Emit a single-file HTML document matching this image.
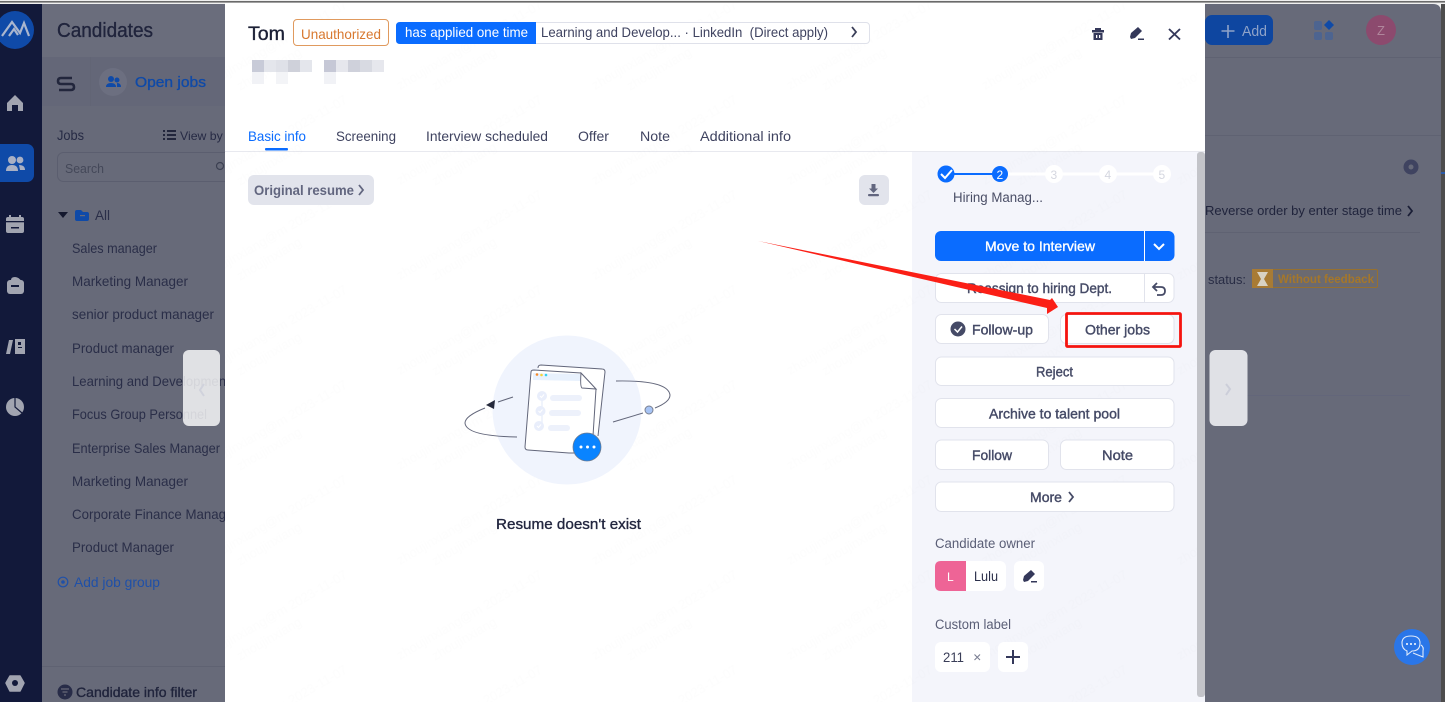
<!DOCTYPE html>
<html><head><meta charset="utf-8"><title>Candidates</title>
<style>
html,body{margin:0;padding:0;background:#fff;width:1445px;height:702px;overflow:hidden}
svg{display:block}
text{font-family:"Liberation Sans","Noto Sans CJK SC",sans-serif;font-size:14px;white-space:pre}
.m{stroke:currentColor;stroke-width:.35px}
.d{fill:#262a44}
.l{font-size:14px;fill:#2a2e48}
.b{fill:#454a66;color:#454a66;stroke:#454a66;stroke-width:.4px;font-size:14px}
.t{fill:#3f4360}
.wm{font-size:13px;fill:#000;opacity:.007}
</style></head><body>
<svg width="1445" height="702" viewBox="0 0 1445 702" xmlns="http://www.w3.org/2000/svg">
<defs>
<pattern id="wm" width="195" height="95" patternUnits="userSpaceOnUse">
<g transform="translate(10,90) rotate(-30)"><text class="wm" x="0" y="0">zhoujinxiang@m 2023-11-07</text><text class="wm" x="30" y="18">zhoujinxiang</text></g>
</pattern>
</defs>
<!-- screen frame -->
<rect width="1445" height="702" fill="#f0f0f0"/>
<rect y="1" width="1445" height="1.6" fill="#6a6a6a"/>
<rect x="1441" y="4" width="4" height="698" fill="#4d4d4d"/>
<path d="M0 4H1433Q1441 4 1441 12V702H0Z" fill="#676a79"/>
<!-- sidebar -->
<rect y="4" width="42" height="698" fill="#12193a"/>
<circle cx="15" cy="30" r="19" fill="#0f4aa8"/>
<path d="M2 36L12 22L20 33L24 23L29 36M9 36L14 29L18 35" fill="none" stroke="#aab6ce" stroke-width="2.200"/>
<path d="M7 103L15 95L23 103V111H18V105H12V111H7Z" fill="#a1a4b0"/>
<rect x="-8" y="144" width="42" height="38" rx="7" fill="#0f4aa8"/>
<circle cx="12" cy="160" r="4" fill="#a9b0c4"/><circle cx="20" cy="160" r="3.4" fill="#a9b0c4"/>
<path d="M6 171Q6 165 12 165Q18 165 18 171ZM19 165Q25 165 25 170H20Z" fill="#a9b0c4"/>
<rect x="6" y="217" width="18" height="16" rx="2" fill="#a1a4b0"/><rect x="9" y="215" width="2" height="4" fill="#a1a4b0"/><rect x="19" y="215" width="2" height="4" fill="#a1a4b0"/><rect x="6" y="221" width="18" height="1.3" fill="#12193a"/><rect x="11" y="227" width="8" height="1.5" fill="#12193a"/>
<path d="M11 282V280Q11 277 15 277Q19 277 22 282Z" fill="#a1a4b0"/><rect x="7" y="280" width="17" height="14" rx="3" fill="#a1a4b0"/><rect x="11" y="285" width="8" height="2" fill="#12193a"/>
<path d="M9 340H13L10 354H6ZM15 339H25V354H15Z" fill="#a1a4b0"/><rect x="18" y="342" width="3" height="3" fill="#12193a"/><rect x="18" y="347" width="4" height="1" fill="#12193a"/>
<circle cx="15" cy="407" r="9" fill="#a1a4b0"/><path d="M15 398V407L22 413" fill="none" stroke="#12193a" stroke-width="1.2"/>
<path d="M10 676H20L24 683L20 691H10L6 683Z" fill="#a1a4b0" stroke="#a1a4b0" stroke-width="1.5" stroke-linejoin="round"/><circle cx="15" cy="683" r="3" fill="#12193a"/>
<!-- left panel -->
<rect x="42" y="4" width="200" height="53" fill="#6a6d7c"/>
<rect x="42" y="57" width="200" height="49" fill="#646778"/>
<rect x="90" y="57" width="1" height="49" fill="#626575"/>
<rect x="42" y="666" width="200" height="1" fill="#5f6272"/>
<text class="m" x="57" y="37" textLength="96" lengthAdjust="spacingAndGlyphs" style="font-size:20px;fill:#20243c;color:#20243c">Candidates</text>
<path d="M72 78H61Q58 78 58 81Q58 84 61 84H71Q74 84 74 87Q74 90 71 90H59" fill="none" stroke="#22263c" stroke-width="2.600"/>
<circle cx="113" cy="82" r="14" fill="#6c6f80"/>
<circle cx="111" cy="79" r="3" fill="#0f4aa8"/><circle cx="117" cy="80" r="2.5" fill="#0f4aa8"/><path d="M106 87Q106 83 111 83Q116 83 116 87ZM117 83Q121 83 121 87H117Z" fill="#0f4aa8"/>
<text class="m" x="135" y="87" textLength="71" lengthAdjust="spacingAndGlyphs" style="font-size:15px;fill:#0f4aa8;color:#0f4aa8">Open jobs</text>
<text x="57" y="140" textLength="27" lengthAdjust="spacingAndGlyphs" class="d">Jobs</text>
<path d="M163 130h2v2h-2zM163 134h2v2h-2zM163 138h2v2h-2zM167 130h9v2h-9zM167 134h9v2h-9zM167 138h9v2h-9z" fill="#22263c"/>
<text x="180" y="140" textLength="53" lengthAdjust="spacingAndGlyphs" style="font-size:12px;fill:#262a44">View by g</text>
<rect x="57.5" y="152.5" width="190" height="29" rx="6" fill="#676a79" stroke="#5b5e6f"/>
<text x="65" y="173" textLength="39" lengthAdjust="spacingAndGlyphs" style="font-size:13px;fill:#444859">Search</text>
<circle cx="220" cy="166" r="3.5" fill="none" stroke="#3c4052" stroke-width="1.2"/>
<path d="M58 212H68L63 218Z" fill="#14182e"/>
<path d="M75 212Q75 210 77 210H81L83 212H87Q89 212 89 214V219Q89 221 87 221H77Q75 221 75 219Z" fill="#0f4aa8"/><rect x="80" y="215" width="5" height="1.2" fill="#676a79"/>
<text x="95" y="220" textLength="15" lengthAdjust="spacingAndGlyphs" class="l">All</text>
<text class="l" x="72" y="253" textLength="85" lengthAdjust="spacingAndGlyphs">Sales manager</text>
<text class="l" x="72" y="286" textLength="116" lengthAdjust="spacingAndGlyphs">Marketing Manager</text>
<text class="l" x="72" y="319" textLength="142" lengthAdjust="spacingAndGlyphs">senior product manager</text>
<text class="l" x="72" y="353" textLength="102" lengthAdjust="spacingAndGlyphs">Product manager</text>
<text class="l" x="72" y="386" textLength="154" lengthAdjust="spacingAndGlyphs">Learning and Developmen</text>
<text class="l" x="72" y="419" textLength="135" lengthAdjust="spacingAndGlyphs">Focus Group Personnel</text>
<text class="l" x="72" y="453" textLength="148" lengthAdjust="spacingAndGlyphs">Enterprise Sales Manager</text>
<text class="l" x="72" y="486" textLength="116" lengthAdjust="spacingAndGlyphs">Marketing Manager</text>
<text class="l" x="72" y="519" textLength="154" lengthAdjust="spacingAndGlyphs">Corporate Finance Manag</text>
<text class="l" x="72" y="552" textLength="102" lengthAdjust="spacingAndGlyphs">Product Manager</text>
<circle cx="63" cy="582" r="4.8" fill="none" stroke="#1f50a8" stroke-width="1.2"/><circle cx="63" cy="582" r="1.8" fill="#1f50a8"/>
<text x="74" y="587" textLength="86" lengthAdjust="spacingAndGlyphs" style="fill:#1f50a8">Add job group</text>
<circle cx="65" cy="692" r="7.5" fill="#282c48"/><path d="M61 689H69M62.500 692H67.500M64 695H66" stroke="#676a79" stroke-width="1.3"/>
<text class="m" x="76" y="697" textLength="121" lengthAdjust="spacingAndGlyphs" style="fill:#20243c;color:#20243c">Candidate info filter</text>
<!-- right background -->
<rect x="1205" y="57" width="236" height="1" fill="#5f6272"/>
<rect x="1205" y="135" width="236" height="1" fill="#5f6272"/>
<rect x="1205" y="15" width="68" height="30" rx="7" fill="#0e46a0"/>
<path d="M1228 25V38M1221.500 31H1234.500" stroke="#8fa3c8" stroke-width="1.6"/>
<text x="1242" y="36" textLength="25" lengthAdjust="spacingAndGlyphs" style="font-size:15px;fill:#8fa3c8">Add</text>
<rect x="1314" y="21" width="8" height="9" rx="2" fill="#4d6490"/><path d="M1329 20L1334 25L1329 30L1324 25Z" fill="#0f4aa8"/><rect x="1314" y="32" width="8" height="8" rx="2" fill="#4d6490"/><rect x="1325" y="32" width="8" height="8" rx="2" fill="#4d6490"/>
<circle cx="1381" cy="30" r="15" fill="#8c4a6e"/><text x="1377" y="35" style="font-size:13px;fill:#b0869c">Z</text>
<circle cx="1411" cy="167" r="7.500" fill="#3f4360"/><circle cx="1411" cy="167" r="2.500" fill="#676a79"/>
<rect x="1441" y="172" width="4" height="2" fill="#2b5aa8"/>
<text x="1205" y="215" textLength="197" lengthAdjust="spacingAndGlyphs" style="font-size:13px;fill:#20243c">Reverse order by enter stage time</text>
<path d="M1408 206L1412 211L1408 216" fill="none" stroke="#1a1e36" stroke-width="1.800"/>
<rect x="1205" y="232" width="215" height="1" fill="#5f6272"/>
<text x="1208" y="284" textLength="38" lengthAdjust="spacingAndGlyphs" style="font-size:13px;fill:#282c44">status:</text>
<rect x="1252.500" y="269.500" width="125" height="18" rx="1.500" fill="#6b6a70" stroke="#96702f"/>
<rect x="1252" y="269" width="21" height="19" fill="#a87b35"/><path d="M1257 272H1268L1264 279L1268 286H1257L1261 279Z" fill="#d8d2c4"/>
<text x="1278" y="283" textLength="96" lengthAdjust="spacingAndGlyphs" style="font-size:12px;font-weight:700;fill:#a5772a">Without feedback</text>
<rect x="1247" y="395" width="163" height="1" fill="#63667a"/>
<circle cx="1412" cy="647" r="18" fill="#2a76e8"/>
<path d="M1411 636Q1402 636 1402 643Q1402 649 1407 651L1407 655L1412 651Q1420 651 1420 643Q1420 636 1411 636Z" fill="none" stroke="#e0ebfb" stroke-width="1.100"/>
<path d="M1421 645Q1424 647 1423 651L1423 657L1418 655L1413 653" fill="none" stroke="#e0ebfb" stroke-width="1.100"/>
<circle cx="1407" cy="644" r="1" fill="#fff"/><circle cx="1411" cy="644" r="1" fill="#fff"/><circle cx="1415" cy="644" r="1" fill="#fff"/>
<!-- modal -->
<rect x="225" y="3" width="980" height="699" fill="#fff"/>
<rect x="912" y="152" width="293" height="550" fill="#f4f5fb"/>
<rect x="225" y="151" width="980" height="1" fill="#e8e9ef"/>
<rect x="1197" y="152" width="8" height="545" rx="3" fill="#c3c4c9"/>
<rect x="225" y="3" width="972" height="699" fill="url(#wm)"/>
<text class="m" x="248" y="40" textLength="37" lengthAdjust="spacingAndGlyphs" style="font-size:19px;fill:#1c2036;color:#1c2036">Tom</text>
<rect x="293.500" y="19.500" width="95" height="26" rx="3.500" fill="#fff" stroke="#e09a5e"/>
<text x="301" y="39" textLength="80" lengthAdjust="spacingAndGlyphs" style="fill:#d8782f">Unauthorized</text>
<rect x="396.500" y="22.500" width="473" height="21" rx="3.500" fill="#fff" stroke="#dfe1ea"/>
<path d="M536 22H400Q396 22 396 26V40Q396 44 400 44H536Z" fill="#0a6cff"/>
<text x="405" y="37" textLength="123" lengthAdjust="spacingAndGlyphs" style="fill:#fff">has applied one time</text>
<text x="541" y="37" textLength="287" lengthAdjust="spacingAndGlyphs" class="t">Learning and Develop... · LinkedIn  (Direct apply)</text>
<path d="M852 27L856 32L852 37" fill="none" stroke="#3a3e58" stroke-width="1.800"/>
<g>
<rect x="252" y="60" width="12" height="12" fill="#c8cbd8"/><rect x="264" y="60" width="12" height="12" fill="#e4e6ec"/><rect x="276" y="60" width="12" height="12" fill="#dfe1e8"/><rect x="288" y="60" width="12" height="12" fill="#cfd1da"/><rect x="300" y="60" width="12" height="12" fill="#e4e6ec"/>
<rect x="324" y="60" width="12" height="12" fill="#c6c8d6"/><rect x="336" y="60" width="12" height="12" fill="#e6e7ed"/><rect x="348" y="60" width="12" height="12" fill="#cfd1db"/><rect x="360" y="60" width="12" height="12" fill="#d8dae2"/><rect x="372" y="60" width="12" height="12" fill="#e6e7ed"/>
<rect x="252" y="72" width="12" height="12" fill="#f1f2f6"/><rect x="276" y="72" width="12" height="12" fill="#f3f4f7"/><rect x="324" y="72" width="12" height="12" fill="#f1f2f6"/>
</g>
<!-- header icons -->
<path d="M1095 28H1101V30H1095ZM1092 30H1104V32.500H1092ZM1093.500 33H1102.500V40H1093.500Z" fill="#34385a"/><rect x="1096" y="35" width="1.300" height="3" fill="#fff"/><rect x="1099" y="35" width="1.300" height="3" fill="#fff"/>
<path d="M1130 37L1131 33L1138 27L1142 31L1135 38L1131 39Z" fill="#34385a"/><rect x="1138" y="38.500" width="6" height="1.500" fill="#34385a"/>
<path d="M1169 29L1180 39.500M1180 29L1169 39.500" stroke="#34385a" stroke-width="1.900"/>
<!-- tabs -->
<text x="248" y="141" textLength="58" lengthAdjust="spacingAndGlyphs" style="fill:#0a6cff">Basic info</text>
<text x="336" y="141" textLength="60" lengthAdjust="spacingAndGlyphs" class="t">Screening</text>
<text x="426" y="141" textLength="122" lengthAdjust="spacingAndGlyphs" class="t">Interview scheduled</text>
<text x="578" y="141" textLength="31" lengthAdjust="spacingAndGlyphs" class="t">Offer</text>
<text x="640" y="141" textLength="30" lengthAdjust="spacingAndGlyphs" class="t">Note</text>
<text x="700" y="141" textLength="91" lengthAdjust="spacingAndGlyphs" class="t">Additional info</text>
<rect x="265" y="148" width="23" height="2.500" rx="1" fill="#0a6cff"/>
<!-- resume toolbar -->
<rect x="248" y="175" width="126" height="30" rx="6" fill="#e2e4ec"/>
<text x="254" y="195" textLength="100" lengthAdjust="spacingAndGlyphs" style="font-size:13.500px;font-weight:700;fill:#62667f">Original resume</text>
<path d="M359 185L363 190L359 195" fill="none" stroke="#62667f" stroke-width="1.800"/>
<rect x="859" y="175" width="30" height="30" rx="6" fill="#e2e4ec"/>
<path d="M871.500 184H875.500V188.500H878L873.500 193L869 188.500H871.500Z" fill="#62667f"/><rect x="868" y="194" width="11" height="2.200" rx="1" fill="#62667f"/>
<!-- illustration -->
<circle cx="567" cy="410" r="74.500" fill="#f0f4fd"/>
<path d="M538 368Q538 365 541 365L602 369Q605 369 605 372L598 436" fill="#fff" stroke="#62667a" stroke-width="1"/>
<path d="M531 372Q531 370 534 370L581 373L596 389L593 436L582 453L569 453L528 450Q525 450 525 447Z" fill="#fff" stroke="#62667a" stroke-width="1"/>
<path d="M533 373L580 374L581 381L533 380Z" fill="#e8f1fd"/>
<circle cx="537" cy="374.500" r="1.300" fill="#f58a2a"/><circle cx="541.500" cy="375" r="1.300" fill="#f5d33a"/><circle cx="546" cy="375" r="1.300" fill="#35d2f0"/>
<path d="M581 373Q580 387 582 388L596 389Z" fill="#fff" stroke="#62667a" stroke-width="1"/>
<path d="M542 396V426" stroke="#eaf0fb" stroke-width="1.500"/>
<circle cx="542" cy="396" r="5" fill="#e9eefb"/><circle cx="540.500" cy="411" r="5" fill="#e9eefb"/><circle cx="539" cy="426" r="5" fill="#e9eefb"/>
<path d="M540 396L541.500 397.500L544 394.500M538.500 411L540 412.500L542.500 409.500M537 426L538.500 427.500L541 424.500" fill="none" stroke="#fff" stroke-width="1"/>
<rect x="550" y="395" width="32" height="6" rx="3" fill="#edf1fb"/><rect x="549" y="410" width="32" height="6" rx="3" fill="#edf1fb"/><rect x="548" y="425" width="22" height="6" rx="3" fill="#edf1fb"/>
<path d="M616 381Q668 380 670 395Q670 402 655 408M643 413L613 422" fill="none" stroke="#62667a" stroke-width="1"/>
<circle cx="649" cy="410" r="4" fill="#a7c4f5" stroke="#7a8090" stroke-width="1"/>
<path d="M513 397L498 402M485 408Q465 416 465 423Q466 436 517 437" fill="none" stroke="#62667a" stroke-width="1"/>
<path d="M486 405L495 400L494 409Z" fill="#262a3c"/>
<circle cx="587" cy="447" r="14" fill="#0a84ff" stroke="#6b7a90" stroke-width=".8"/>
<circle cx="581" cy="447" r="1.500" fill="#fff"/><circle cx="587.500" cy="447" r="1.500" fill="#fff"/><circle cx="594" cy="447" r="1.500" fill="#fff"/>
<text class="m" x="496" y="529" textLength="145" lengthAdjust="spacingAndGlyphs" style="font-size:15px;fill:#22263f;color:#22263f">Resume doesn't exist</text>
<!-- nav buttons -->
<rect x="183" y="350" width="37" height="76" rx="6" fill="#fff" fill-opacity=".8"/>
<path d="M204 384L200 390L204 396" fill="none" stroke="#d0d2dc" stroke-width="2"/>
<rect x="1209.500" y="350" width="38" height="76" rx="6" fill="#e0e1e6"/>
<path d="M1226 384L1230 389L1226 395" fill="none" stroke="#ccced9" stroke-width="2"/>
<!-- stepper -->
<rect x="1000" y="172.500" width="162" height="3" fill="#fff"/>
<rect x="946" y="173" width="54" height="2" fill="#0a6cff"/>
<circle cx="946" cy="174" r="8.500" fill="#0a6cff"/><path d="M941 174L945 178L952 170" fill="none" stroke="#fff" stroke-width="2"/>
<circle cx="1000" cy="174" r="8" fill="#0a6cff"/><text x="996.500" y="179" style="font-size:12px;fill:#fff">2</text>
<circle cx="1054" cy="174" r="9" fill="#fff"/><text x="1050.500" y="179" style="font-size:12px;fill:#d5d7e0">3</text>
<circle cx="1108" cy="174" r="9" fill="#fff"/><text x="1104.500" y="179" style="font-size:12px;fill:#d5d7e0">4</text>
<circle cx="1162" cy="174" r="9" fill="#fff"/><text x="1158.500" y="179" style="font-size:12px;fill:#d5d7e0">5</text>
<text x="953" y="202" textLength="90" lengthAdjust="spacingAndGlyphs" style="font-size:13.500px;fill:#4a4e66">Hiring Manag...</text>
<!-- actions -->
<rect x="935" y="231" width="239.500" height="30" rx="6" fill="#0a6cff"/><rect x="1144" y="231" width="1" height="30" fill="#fff"/>
<text class="m" x="985" y="251" textLength="110" lengthAdjust="spacingAndGlyphs" style="fill:#fff;color:#fff">Move to Interview</text>
<path d="M1154 244L1159 249L1164 244" fill="none" stroke="#fff" stroke-width="2"/>
<g fill="#fff" stroke="#e1e3ec">
<rect x="935.500" y="273.500" width="238.500" height="29" rx="6"/>
<rect x="935.500" y="314.500" width="113" height="29" rx="6"/>
<rect x="1060.500" y="314.500" width="113.500" height="29" rx="6"/>
<rect x="935.500" y="357" width="238.500" height="28.500" rx="6"/>
<rect x="935.500" y="398.500" width="238.500" height="29" rx="6"/>
<rect x="935.500" y="440" width="113" height="29.500" rx="6"/>
<rect x="1060.500" y="440" width="113.500" height="29.500" rx="6"/>
<rect x="935.500" y="482" width="238.500" height="29.500" rx="6"/>
</g>
<rect x="1144" y="274" width="1" height="28" fill="#e1e3ec"/>
<text class="b" x="967" y="293" textLength="145" lengthAdjust="spacingAndGlyphs">Reassign to hiring Dept.</text>
<path d="M1157 283L1153 287L1157 291M1153 287H1161Q1165 287 1165 291Q1165 295 1161 295H1157" fill="none" stroke="#454a66" stroke-width="1.800"/>
<circle cx="958" cy="329" r="7.500" fill="#454a66"/><path d="M954.500 329L957.500 332L962 326.500" fill="none" stroke="#fff" stroke-width="1.500"/>
<text class="b" x="972" y="334.500" textLength="61" lengthAdjust="spacingAndGlyphs">Follow-up</text>
<text class="b" x="1085" y="334.500" textLength="65" lengthAdjust="spacingAndGlyphs">Other jobs</text>
<text class="b" x="1036" y="376.500" textLength="37" lengthAdjust="spacingAndGlyphs">Reject</text>
<text class="b" x="989" y="418.500" textLength="131" lengthAdjust="spacingAndGlyphs">Archive to talent pool</text>
<text class="b" x="972" y="460" textLength="40" lengthAdjust="spacingAndGlyphs">Follow</text>
<text class="b" x="1102" y="460" textLength="31" lengthAdjust="spacingAndGlyphs">Note</text>
<text class="b" x="1030" y="502" textLength="32" lengthAdjust="spacingAndGlyphs">More</text>
<path d="M1069 492L1073 497L1069 502" fill="none" stroke="#454a66" stroke-width="1.800"/>
<text x="935" y="548" textLength="100" lengthAdjust="spacingAndGlyphs" style="font-size:13.500px;fill:#5a5e76">Candidate owner</text>
<rect x="935" y="561" width="71" height="30" rx="6" fill="#fff"/>
<path d="M966 561H941Q935 561 935 567V585Q935 591 941 591H966Z" fill="#ee6496"/>
<text x="947" y="581" style="font-size:12px;fill:#fff">L</text>
<text x="974" y="581" textLength="24" lengthAdjust="spacingAndGlyphs" style="fill:#2b2f4a">Lulu</text>
<rect x="1014" y="561" width="30" height="30" rx="6" fill="#fff"/>
<path d="M1023 580L1024 576L1031 570L1035 574L1028 581L1024 582Z" fill="#34385a"/><rect x="1031" y="581" width="6" height="1.500" fill="#34385a"/>
<text x="935" y="629" textLength="76" lengthAdjust="spacingAndGlyphs" style="font-size:13.500px;fill:#5a5e76">Custom label</text>
<rect x="935" y="642" width="55" height="30" rx="6" fill="#fff"/>
<text x="943" y="662" textLength="21" lengthAdjust="spacingAndGlyphs" style="fill:#3a3e58">211</text>
<path d="M974.500 654.500L980 660M980 654.500L974.500 660" stroke="#7a7e92" stroke-width="1.100"/>
<rect x="998" y="642" width="30" height="30" rx="6" fill="#fff"/>
<path d="M1013 650V664M1006 657H1020" stroke="#34385a" stroke-width="2"/>
<!-- annotations -->
<polygon points="758,241 1050,300 1052,298 1058,307 1047,314 1047,308" fill="#fb1f16"/>
<rect x="1066.500" y="313.500" width="114" height="33" rx="1" fill="none" stroke="#f5140f" stroke-width="2.800"/>
</svg>
</body></html>
